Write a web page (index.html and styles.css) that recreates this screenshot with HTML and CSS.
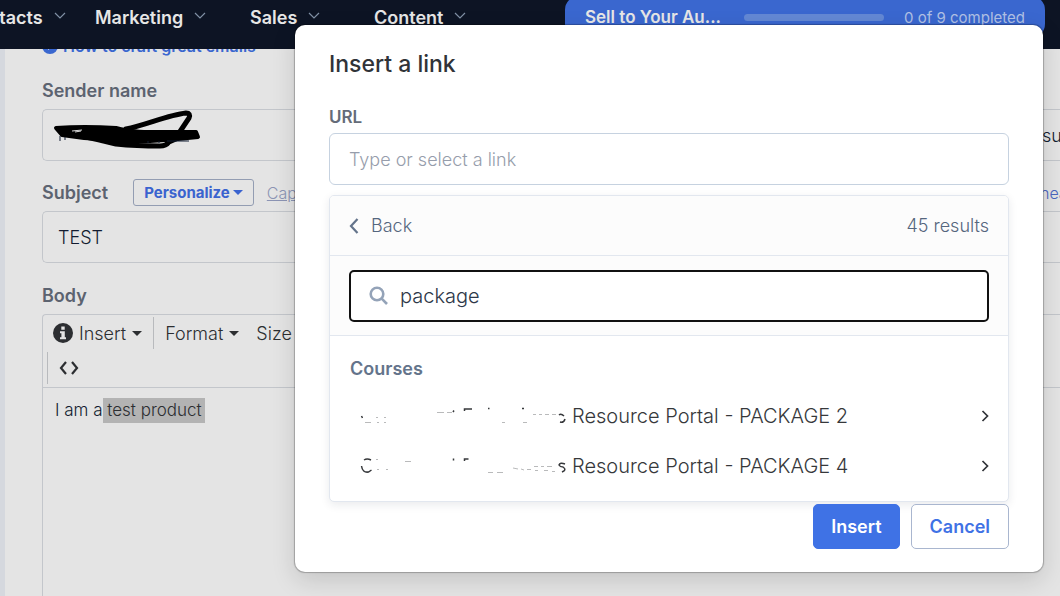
FILE: index.html
```
<!DOCTYPE html>
<html lang="en">
<head>
<meta charset="utf-8">
<title>Insert a link</title>
<link rel="stylesheet" href="styles.css">
</head>
<body>
<header class="topbar">
  <nav class="nav">
    <a class="nav-item" href="#">Contacts<svg class="chev" viewBox="0 0 12 8"><path d="M1 1l5 5 5-5"/></svg></a>
    <a class="nav-item" href="#">Marketing<svg class="chev" viewBox="0 0 12 8"><path d="M1 1l5 5 5-5"/></svg></a>
    <a class="nav-item" href="#">Sales<svg class="chev" viewBox="0 0 12 8"><path d="M1 1l5 5 5-5"/></svg></a>
    <a class="nav-item" href="#">Content<svg class="chev" viewBox="0 0 12 8"><path d="M1 1l5 5 5-5"/></svg></a>
  </nav>
  <div class="progress-card">
    <strong class="progress-title">Sell to Your Au...</strong>
    <span class="progress-bar"></span>
    <span class="progress-count">0 of 9 completed</span>
  </div>
</header>

<main class="page">
  <a class="help" href="#"><svg class="help-icon" viewBox="0 0 16 16"><circle cx="8" cy="8" r="8"/><path d="M6 4l5 4-5 4z"/></svg>How to craft great emails</a>

  <label class="label" for="sender">Sender name</label>
  <div class="field sender-field">
    <input class="field-input" id="sender" type="text">
    <span class="field-end">su</span>
    <svg class="scribble" viewBox="0 0 160 44" fill="none">
      <path d="M76 19C96 15 118 5 136 3Q141 3 139 8L129 23M128 28L119 32Q116 36 110 36Q86 36 66 34C54 31 46 29 36 27" stroke="#000" stroke-width="5" stroke-linecap="round" stroke-linejoin="round"/>
      <path d="M6 18C22 17 48 17 66 18C82 23 100 22 146 22L148 27C130 29 120 30 100 31L64 31C52 30 46 28 34 28L12 25Z" fill="#000" stroke="#000" stroke-width="4" stroke-linejoin="round"/>
      <path d="M10 26v5M15 27v3M98 31v2M109 31v2M117 31h22" stroke="#111c33" stroke-width="1"/>
      <path d="M22 21l10-1M25 22l6-1" stroke="#d8d8d8" stroke-width="1"/>
    </svg>
  </div>

  <div class="subject-row">
    <label class="label" for="subject">Subject</label>
    <button class="personalize" type="button">Personalize<span class="caret"></span></button>
    <a class="capitalize" href="#">Capitalize</a>
    <a class="row-end" href="#">hea</a>
  </div>
  <div class="field"><input class="field-input" id="subject" type="text" value="TEST"></div>

  <h2 class="label body-label">Body</h2>
  <section class="editor">
    <div class="toolbar">
      <div class="tools">
        <button class="tool first" type="button"><svg class="info" viewBox="0 0 20 20"><circle cx="10" cy="10" r="10"/><path d="M8.3 3.5h3.4v3.2H8.3zM7 8.2h4.8v6H13v2H7v-2h1.4v-4H7z"/></svg>Insert<span class="caret"></span></button>
        <button class="tool" type="button">Format<span class="caret"></span></button>
        <button class="tool" type="button">Size<span class="caret"></span></button>
        <span class="tool-end"><span class="caret"></span></span>
      </div>
      <button class="code" type="button" aria-label="Source code"><svg viewBox="0 0 20 14"><path d="M7 1L2 7l5 6M13 1l5 6-5 6"/></svg></button>
    </div>
    <p class="copy">I am a<mark> test product</mark></p>
  </section>
</main>

<div class="overlay">
  <section class="modal" role="dialog" aria-labelledby="modal-title">
    <h1 class="modal-title" id="modal-title">Insert a link</h1>
    <label class="url-label" for="url">URL</label>
    <input class="url" id="url" type="text" placeholder="Type or select a link">
    <div class="picker">
      <div class="picker-head">
        <button class="back" type="button"><svg viewBox="0 0 10 16"><path d="M8.500 1L2 8l6.500 7"/></svg>Back</button>
        <span>45 results</span>
      </div>
      <div class="search-wrap">
        <label class="search">
          <svg viewBox="0 0 20 20"><circle cx="8" cy="8" r="6.300"/><path d="M12.700 12.700l5.300 5.300"/></svg>
          <input class="search-input" type="text" value="package" aria-label="Search">
        </label>
      </div>
      <div class="results">
        <h2 class="group">Courses</h2>
        <button class="result" type="button">
          <svg class="erased" viewBox="0 0 206 24"><path class="dark" d="M1.500 12l1 2M104.500 7V5H112M128 4.500h1.500M162 4.500h2M93 8l1-1.500M199 11q2-2 5 1M200 18q4 1 5-3"/><path d="M5 18.500h6M16 13.500h2M24 13.500h2M17 18.500h2M24 18.500h2M77 8.500h7M87 8.500h5M173 10.500h3M179 10.500h3M185 10.500h4M192 10.500h4M142 18.500h3M163 18.500h4"/></svg>
          <span>Resource Portal - PACKAGE 2</span>
          <svg class="go" viewBox="0 0 8 14"><path d="M1.500 2L6.500 7l-5 5"/></svg>
        </button>
        <button class="result" type="button">
          <svg class="erased" viewBox="0 0 206 24"><path class="dark" d="M4 6q3-2 7 0M1.500 12q1 7 7 6l3-2M93.500 4.500v2M104.500 7V5h4M205 10q-5-2-6 1q1 2 4 2q3 2 1 4l-2 1"/><path d="M16 5.500h2M17 15.500h2M26 15.500h2M45 7.500h6M128 18.500h5M137 18.500h6M153 14l5 1M161 15l3 1M167 15.500h4M174 12.500h4M175 16.500h3M181 12.500h3M184 16.500h4M187 12.500h5M192 17.500h3"/></svg>
          <span>Resource Portal - PACKAGE 4</span>
          <svg class="go" viewBox="0 0 8 14"><path d="M1.500 2L6.500 7l-5 5"/></svg>
        </button>
      </div>
    </div>
    <div class="actions">
      <button class="btn primary" type="button">Insert</button>
      <button class="btn" type="button">Cancel</button>
    </div>
  </section>
</div>
</body>
</html>
```
FILE: styles.css
```
* { box-sizing: border-box; }
body {
  margin: 0;
  height: 100vh;
  overflow: hidden;
  display: flex;
  flex-direction: column;
  position: relative;
  background: #e4e4e4;
  font-family: Inter, "Liberation Sans", sans-serif;
  font-size: 18px;
  font-weight: 300;
}
button, input { font: inherit; color: inherit; }
button { background: none; border: 0; padding: 0; cursor: pointer; }
a { text-decoration: none; color: inherit; }
svg { fill: none; flex: none; }

.topbar {
  flex: none;
  height: 49px;
  z-index: 1;
  background: #0d1424;
  display: flex;
  justify-content: space-between;
  padding-right: 15px;
}
.nav {
  display: grid;
  grid-template-columns: 131px 155px 124px auto;
  align-items: center;
  height: 34px;
  margin-left: -36px;
  color: #e6e6e6;
  font-weight: 600;
}
.nav-item { display: flex; align-items: center; gap: 11px; }
.chev { width: 12px; height: 8px; stroke: #8090a5; stroke-width: 1.2; margin-top: -2px; }
.progress-card {
  width: 480px;
  height: 42px;
  margin-top: -4px;
  padding: 0 20px;
  border-radius: 14px;
  background: #3a67cf;
  color: #e6e6e6;
  display: flex;
  align-items: center;
}
.progress-title { font-size: 17px; font-weight: 600; }
.progress-bar { width: 140px; height: 7px; margin: 0 20px 0 auto; border-radius: 4px; background: #6388d4; }
.progress-count { font-size: 15px; font-weight: 400; color: #b0c0e4; }

.page {
  flex: 1;
  display: flex;
  flex-direction: column;
  margin-top: -13px;
  padding-left: 37px;
  border-left: 5px solid #d5d8de;
}
.help {
  display: flex;
  align-items: center;
  gap: 5px;
  height: 20px;
  font-size: 16px;
  font-weight: 600;
  color: #3a67cf;
}
.help-icon { width: 16px; height: 16px; fill: #3a67cf; }
.help-icon path { fill: #e4e4e4; }
.label { margin: 0; font-size: 18px; line-height: 24px; font-weight: 600; color: #5c6370; }
.help + .label { margin: 23px 0 6px; }
.field {
  position: relative;
  display: flex;
  align-items: center;
  height: 52px;
  border: 1px solid #c3c6cb;
  border-right: 0;
  border-radius: 5px 0 0 5px;
  color: #131c31;
}
.field-input { flex: 1; min-width: 0; height: 100%; padding: 0 15px; background: none; border: 0; outline: 0; }
.field-end { width: 18px; overflow: hidden; }
.scribble { position: absolute; left: 7px; top: 0; width: 160px; height: 44px; }
.subject-row { display: flex; align-items: center; height: 50px; padding-top: 13px; }
.personalize {
  height: 27px;
  margin: 0 13px 0 25px;
  padding: 0 10px;
  display: flex;
  align-items: center;
  gap: 3px;
  border: 1px solid #939db2;
  border-radius: 3px;
  font-size: 15px;
  font-weight: 700;
  color: #3a63cf;
}
.caret { border: 5px solid transparent; border-top-color: currentColor; border-bottom: 0; }
.capitalize { font-size: 16px; color: #8c94b4; text-decoration: underline; }
.row-end { margin-left: auto; width: 20px; overflow: hidden; font-size: 16px; color: #4a66c0; }
.body-label { margin: 21px 0 6px; }
.editor { flex: 1; border: 1px solid #c3c6cb; border-width: 1px 0 0 1px; border-radius: 4px 0 0; color: #2c2e31; }
.toolbar { border-bottom: 1px solid #c3c6cb; padding: 2px 0 3px 4px; }
.tools { display: flex; align-items: center; height: 32px; }
.tool { display: flex; align-items: center; gap: 6px; height: 32px; }
.tool.first { padding: 0 11px 0 6px; border-right: 1px solid #b8babd; }
.tool + .tool { padding: 0 6px 0 11px; }
.tool-end { margin-left: auto; width: 3px; overflow: hidden; }
.info { width: 20px; height: 20px; fill: #2c2e31; }
.info path { fill: #e4e4e4; }
.code { display: flex; align-items: center; height: 32px; margin-top: 3px; padding-left: 11px; border-left: 1px solid #b8babd; }
.code svg { width: 20px; height: 14px; stroke: #2c2e31; stroke-width: 2.2; }
.copy { margin: 10px 0 0 12px; font-size: 17px; line-height: 25px; color: #131c31; }
.copy mark { display: inline-block; white-space: pre; padding-right: 3px; background: #b3b3b3; color: #2c2e31; }

.overlay { position: absolute; z-index: 2; inset: 0; padding: 25px 17px 0; display: flex; justify-content: flex-end; align-items: flex-start; }
.modal {
  width: 100%;
  max-width: 748px;
  padding: 24px 34px 23px;
  background: #fff;
  border-radius: 10px;
  box-shadow: 0 0 1px 1px rgba(0, 0, 0, .25), 0 8px 24px rgba(0, 0, 0, .14);
}
.modal-title { margin: 0; font-size: 23px; line-height: 30px; font-weight: 500; color: #303338; }
.url-label { display: block; margin: 26px 0 4px; font-size: 17px; line-height: 24px; font-weight: 600; color: #656c79; }
.url {
  display: block;
  width: 100%;
  height: 52px;
  padding: 0 19px;
  border: 1px solid #c6d2e0;
  border-radius: 6px;
  outline: 0;
  color: #384252;
}
.url::placeholder { color: #969dab; opacity: 1; }
.picker { margin: 10px 0 2px; border: 1px solid #e2e7ef; border-radius: 5px; box-shadow: 0 3px 10px rgba(20, 30, 60, .09); overflow: hidden; background: #fff; }
.picker-head { display: flex; align-items: center; justify-content: space-between; height: 60px; padding: 0 19px; background: #fcfcfc; color: #55667e; border-bottom: 1px solid #e2e7ef; }
.back { display: flex; align-items: center; gap: 12px; }
.back svg { width: 10px; height: 16px; stroke: #64748b; stroke-width: 2.2; }
.search-wrap { padding: 14px 19px 13px; background: #fcfcfc; border-bottom: 1px solid #e2e7ef; }
.search { display: flex; align-items: center; gap: 11px; height: 52px; padding: 0 18px; border: 2px solid #111; border-radius: 5px; background: #fff; }
.search svg { width: 20px; height: 20px; stroke: #94a3b8; stroke-width: 2.6; }
.search-input { flex: 1; min-width: 0; padding: 0; border: 0; outline: 0; background: none; font-size: 20px; color: #2d3748; }
.results { padding: 20px 19px 10px 30px; }
.group { margin: 0 0 9px -10px; font-size: 18px; line-height: 26px; font-weight: 600; color: #64748b; }
.result { display: flex; align-items: center; width: 100%; height: 50px; font-size: 20px; font-weight: 350; color: #36383b; }
.erased { width: 206px; height: 24px; margin-right: 6px; stroke: #b9babb; stroke-width: 1; }
.erased .dark { stroke: #36383b; stroke-width: 1.5; }
.go { width: 8px; height: 14px; margin-left: auto; stroke: #303338; stroke-width: 1.7; }
.actions { display: flex; justify-content: flex-end; gap: 11px; }
.btn { height: 45px; padding: 0 18px; border: 1px solid #a9b6cf; border-radius: 5px; background: #fff; font-weight: 600; color: #3f72e5; }
.btn.primary { padding: 0 17px; background: #3f72e5; border-color: #3f72e5; color: #fff; }
```
